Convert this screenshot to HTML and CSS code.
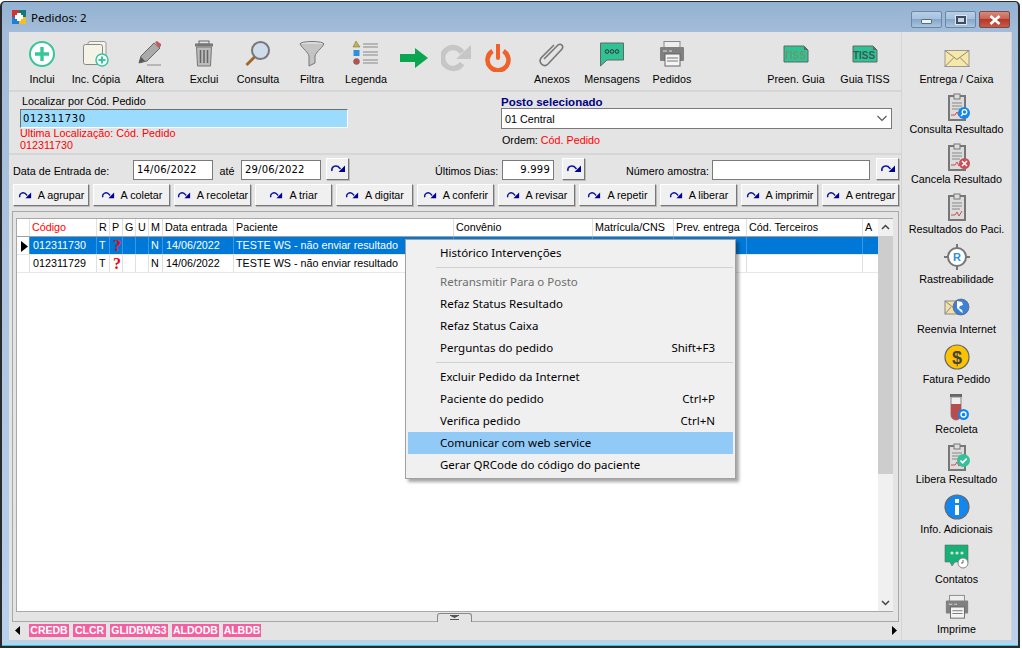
FILE: index.html
```html
<!DOCTYPE html>
<html lang="pt">
<head>
<meta charset="utf-8">
<title>Pedidos: 2</title>
<link rel="stylesheet" href="styles.css">
</head>
<body>
<svg class="defs" width="0" height="0">
  <defs>
    <symbol id="redo" viewBox="0 0 16 12"><path d="M2 8C1 4 5 2 8 3.500L10.500 6" fill="none" stroke="#1018a0" stroke-width="1.600"/><path d="M15 2.500V9H8.500Z" fill="#000090"/></symbol>
    <symbol id="clip" viewBox="0 0 28 28"><rect x="6" y="3" width="16" height="24" fill="#dcdcdc" stroke="#777" stroke-width="2"/><rect x="11" y="1" width="6" height="5" fill="#ddd" stroke="#777"/><path d="M9 10h10M9 13h10M9 16h8" stroke="#888"/><path d="M8 22l4 0 2-3 2 4 3-5" fill="none" stroke="#c85050"/></symbol>
  </defs>
</svg>
<div class="window">
  <header class="titlebar">
    <svg class="app-icon" width="14" height="14" viewBox="0 0 14 14"><rect width="7" height="7" fill="#d0342c"/><rect x="7" width="7" height="7" fill="#137a7a"/><rect y="7" width="7" height="7" fill="#1a80d8"/><rect x="7" y="7" width="7" height="7" fill="#f5bd1f"/><path d="M5 3h4v2h2v4H9v2H5V9H3V5h2z" fill="#fff"/></svg>
    <span class="title">Pedidos: 2</span>
    <div class="controls">
      <div class="ctl"><span class="ctl-min"></span></div>
      <div class="ctl"><span class="ctl-max"></span></div>
      <div class="ctl ctl-close"><svg width="12" height="10" viewBox="0 0 12 10"><path d="M1.500 1l9 8M10.500 1l-9 8" stroke="#fff" stroke-width="2.600"/></svg></div>
    </div>
  </header>
  <div class="client">
    <main class="main">
      <section class="toolbar">
        <div class="tool"><svg width="28" height="28" viewBox="0 0 28 28"><circle cx="14" cy="14" r="12" fill="#fff" stroke="#35c79a" stroke-width="2"/><path d="M14 7v14M7 14h14" stroke="#35c79a" stroke-width="3.400"/></svg><span>Inclui</span></div>
        <div class="tool"><svg width="28" height="28" viewBox="0 0 28 28"><rect x="6" y="1.500" width="18" height="20" rx="2" fill="#f5f2e6" stroke="#999"/><rect x="1.500" y="4.500" width="19" height="20" rx="2" fill="#f5f2e6" stroke="#888"/><circle cx="20" cy="20" r="6" fill="#fff" stroke="#35c79a" stroke-width="1.500"/><path d="M20 16.500v7M16.500 20h7" stroke="#35c79a" stroke-width="2"/></svg><span>Inc. Cópia</span></div>
        <div class="tool"><svg width="28" height="28" viewBox="0 0 28 28"><path d="M3 23l2-7L18 3l6 5L11 21z" fill="#aaa" stroke="#666"/><path d="M19 2l2-1 4 3 0 2-2 2z" fill="#c45a5a"/><path d="M3 23l2-6 4 4z" fill="#555"/><path d="M11 25h14" stroke="#888"/></svg><span>Altera</span></div>
        <div class="tool"><svg width="28" height="28" viewBox="0 0 28 28"><rect x="9" y="1" width="10" height="3" fill="none" stroke="#666"/><rect x="5" y="3.500" width="18" height="3" fill="#777"/><path d="M6.500 7h15l-1 19h-13z" fill="#bbb" stroke="#777"/><path d="M10.500 10v13M14 10v13M17.500 10v13" stroke="#666" stroke-width="1.500"/></svg><span>Exclui</span></div>
        <div class="tool"><svg width="28" height="28" viewBox="0 0 28 28"><circle cx="16.500" cy="10.500" r="8.500" fill="#cfdcec" stroke="#777" stroke-width="2"/><path d="M10.500 17l-8 8" stroke="#a0672e" stroke-width="3"/></svg><span>Consulta</span></div>
        <div class="tool"><svg width="28" height="28" viewBox="0 0 28 28"><ellipse cx="14" cy="4" rx="12" ry="2.500" fill="#ddd" stroke="#777"/><path d="M2 4c3 5 8 8 9 12v10l6-3v-7c1-4 6-7 9-12" fill="#c4c4c4" stroke="#777"/></svg><span>Filtra</span></div>
        <div class="tool"><svg width="28" height="28" viewBox="0 0 28 28"><path d="M4 1l4 6H1z" fill="#c9b43c" stroke="#666" stroke-width=".5"/><rect x="1.500" y="10" width="6" height="6" fill="#2d8fe0"/><circle cx="4.500" cy="21.500" r="3" fill="#b85050" stroke="#666" stroke-width=".5"/><path d="M11 4h15M11 7h15M11 12h15M11 15h15M11 20h15M11 23h15" stroke="#888" stroke-width="1.200"/></svg><span>Legenda</span></div>
        <div class="tool tool-nav tool-arrow"><svg width="30" height="20" viewBox="0 0 30 20"><path d="M1 6h15V0l13 10-13 10v-6H1z" fill="#0ba650"/></svg></div>
        <div class="tool tool-nav"><svg width="30" height="28" viewBox="0 0 30 28"><path d="M21 19.500a10.500 10.500 0 1 1 0-11" fill="none" stroke="#c6c6c6" stroke-width="5.500"/><path d="M30 1v14H15z" fill="#c6c6c6"/></svg></div>
        <div class="tool tool-nav"><svg width="26" height="28" viewBox="0 0 26 28"><path d="M7.500 7a10.500 10.500 0 1 0 11 0" fill="none" stroke="#f0602a" stroke-width="4.500"/><path d="M13 1v13" stroke="#f0602a" stroke-width="4" stroke-linecap="round"/></svg></div>
        <div class="tool tool-anexos"><svg width="28" height="28" viewBox="0 0 28 28"><path d="M7 18L21 4c3-2 6 1 4 4L11 23c-4 4-10-1-7-6L17 4" transform="translate(-1 1)" fill="none" stroke="#777" stroke-width="1.600"/></svg><span>Anexos</span></div>
        <div class="tool tool-msg"><svg width="26" height="26" viewBox="0 0 26 26"><path d="M1.500 2h23v17H8l-6.500 6z" fill="#2fc294" stroke="#666"/><circle cx="8" cy="10.500" r="1.800" fill="none" stroke="#333"/><circle cx="13" cy="10.500" r="1.800" fill="none" stroke="#333"/><circle cx="18" cy="10.500" r="1.800" fill="none" stroke="#333"/></svg><span>Mensagens</span></div>
        <div class="tool tool-ped"><svg width="28" height="28" viewBox="0 0 28 28"><rect x="6" y="1.500" width="16" height="8" fill="#eee" stroke="#888"/><rect x="2" y="7" width="24" height="14" rx="1" fill="#808080"/><path d="M5 11h4M11 11h3" stroke="#ddd"/><rect x="7" y="14" width="15" height="12" fill="#f4f4f4" stroke="#666"/><path d="M9 18h11M9 21h11" stroke="#777"/></svg><span>Pedidos</span></div>
        <div class="tool tool-guia"><svg width="26" height="18" viewBox="0 0 26 18"><path d="M1 1h20l4 4v12H1z" fill="#2fc294" stroke="#666"/><path d="M21 1v4h4z" fill="#666"/><text x="12" y="13.500" text-anchor="middle" class="tiss tiss-light">TISS</text></svg><span>Preen. Guia</span></div>
        <div class="tool tool-tiss"><svg width="26" height="18" viewBox="0 0 26 18"><path d="M1 1h20l4 4v12H1z" fill="#2fc294" stroke="#666"/><path d="M21 1v4h4z" fill="#666"/><text x="12" y="13.500" text-anchor="middle" class="tiss">TISS</text></svg><span>Guia TISS</span></div>
      </section>

      <section class="search">
        <div class="search-left">
          <label class="search-label">Localizar por Cód. Pedido</label>
          <div class="search-input">012311730</div>
          <div class="red">Ultima Localização: Cód. Pedido</div>
          <div class="red">012311730</div>
        </div>
        <div class="search-right">
          <div class="posto-label">Posto selecionado</div>
          <div class="select"><span>01 Central</span><svg width="12" height="7" viewBox="0 0 12 7"><path d="M1.500 1l4.500 4.500L10.500 1" fill="none" stroke="#555" stroke-width="1.100"/></svg></div>
          <div class="ordem">Ordem: <span class="red-inline">Cód. Pedido</span></div>
        </div>
      </section>

      <section class="filters">
        <span class="f-label f-data">Data de Entrada de:</span>
        <div class="field f-date">14/06/2022</div>
        <span class="f-label f-ate">até</span>
        <div class="field f-date">29/06/2022</div>
        <button class="icon-btn f-btn1"><svg width="16" height="12"><use href="#redo"/></svg></button>
        <span class="f-label f-ult">Últimos Dias:</span>
        <div class="field f-days">9.999</div>
        <button class="icon-btn f-btn2"><svg width="16" height="12"><use href="#redo"/></svg></button>
        <span class="f-label f-num">Número amostra:</span>
        <div class="field f-sample"></div>
        <button class="icon-btn f-btn3"><svg width="16" height="12"><use href="#redo"/></svg></button>
      </section>

      <section class="status-row">
        <button class="status"><svg width="14" height="11"><use href="#redo"/></svg>A agrupar</button>
        <button class="status"><svg width="14" height="11"><use href="#redo"/></svg>A coletar</button>
        <button class="status"><svg width="14" height="11"><use href="#redo"/></svg>A recoletar</button>
        <button class="status"><svg width="14" height="11"><use href="#redo"/></svg>A triar</button>
        <button class="status"><svg width="14" height="11"><use href="#redo"/></svg>A digitar</button>
        <button class="status"><svg width="14" height="11"><use href="#redo"/></svg>A conferir</button>
        <button class="status"><svg width="14" height="11"><use href="#redo"/></svg>A revisar</button>
        <button class="status"><svg width="14" height="11"><use href="#redo"/></svg>A repetir</button>
        <button class="status"><svg width="14" height="11"><use href="#redo"/></svg>A liberar</button>
        <button class="status"><svg width="14" height="11"><use href="#redo"/></svg>A imprimir</button>
        <button class="status"><svg width="14" height="11"><use href="#redo"/></svg>A entregar</button>
      </section>

      <section class="grid-frame">
        <div class="grid-box">
          <div class="grid">
            <div class="row head">
              <div class="c c0"></div><div class="c c1 code-h">Código</div><div class="c c2">R</div><div class="c c3">P</div><div class="c c4">G</div><div class="c c5">U</div><div class="c c6">M</div><div class="c c7">Data entrada</div><div class="c c8">Paciente</div><div class="c c9">Convênio</div><div class="c c10">Matrícula/CNS</div><div class="c c11">Prev. entrega</div><div class="c c12">Cód. Terceiros</div><div class="c c13">A</div>
            </div>
            <div class="row sel">
              <div class="c c0"><svg width="7" height="11" viewBox="0 0 7 11"><path d="M0 0l7 5.500L0 11z" fill="#000"/></svg></div><div class="c c1 num">012311730</div><div class="c c2">T</div><div class="c c3 q">?</div><div class="c c4"></div><div class="c c5"></div><div class="c c6">N</div><div class="c c7 num">14/06/2022</div><div class="c c8">TESTE WS - não enviar resultado</div><div class="c c9"></div><div class="c c10"></div><div class="c c11"></div><div class="c c12"></div><div class="c c13"></div>
            </div>
            <div class="row">
              <div class="c c0"></div><div class="c c1 num">012311729</div><div class="c c2">T</div><div class="c c3 q">?</div><div class="c c4"></div><div class="c c5"></div><div class="c c6">N</div><div class="c c7 num">14/06/2022</div><div class="c c8">TESTE WS - não enviar resultado</div><div class="c c9"></div><div class="c c10"></div><div class="c c11"></div><div class="c c12"></div><div class="c c13"></div>
            </div>
          </div>
          <div class="vscroll">
            <svg width="15" height="17" viewBox="0 0 15 17"><path d="M4 10l3.500-3.500L11 10" fill="none" stroke="#444" stroke-width="1.500"/></svg>
            <div class="thumb"></div>
            <div class="spacer"></div>
            <svg width="15" height="17" viewBox="0 0 15 17"><path d="M4 7l3.500 3.500L11 7" fill="none" stroke="#444" stroke-width="1.500"/></svg>
          </div>
        </div>
        <div class="splitter"><svg width="9" height="5" viewBox="0 0 9 5"><path d="M0 .500h9M1.500 1.500h6M3.500 2.500h2M0 4.500h9" stroke="#555"/></svg></div>
      </section>

      <section class="tabs">
        <svg class="arrow" width="6" height="9" viewBox="0 0 6 9"><path d="M5 0v9L0 4.500z" fill="#000"/></svg>
        <span class="tag t1">CREDB</span><span class="tag t2">CLCR</span><span class="tag t3">GLIDBWS3</span><span class="tag t4">ALDODB</span><span class="tag t5">ALBDB</span>
        <svg class="arrow arrow-r" width="6" height="9" viewBox="0 0 6 9"><path d="M1 0v9l5-4.500z" fill="#000"/></svg>
      </section>
    </main>

    <aside class="side">
      <div class="side-item"><svg width="26" height="20" viewBox="0 0 26 20"><rect x="1" y="2" width="24" height="16" fill="#f7e8a8" stroke="#999"/><path d="M1 2l12 9 12-9M1 18l9-9M25 18l-9-9" fill="none" stroke="#888"/></svg><span>Entrega / Caixa</span></div>
      <div class="side-item"><svg width="28" height="28" viewBox="0 0 28 28"><use href="#clip"/><circle cx="21" cy="20" r="6" fill="#1287ee"/><circle cx="21.500" cy="19" r="2.300" fill="none" stroke="#fff" stroke-width="1.200"/><path d="M20 21l-2 2" stroke="#fff" stroke-width="1.200"/></svg><span>Consulta Resultado</span></div>
      <div class="side-item"><svg width="28" height="28" viewBox="0 0 28 28"><use href="#clip"/><circle cx="21.500" cy="20.500" r="5.500" fill="#c4505a"/><path d="M19 18l5 5M24 18l-5 5" stroke="#fff" stroke-width="1.500"/></svg><span>Cancela Resultado</span></div>
      <div class="side-item"><svg width="28" height="28" viewBox="0 0 28 28"><use href="#clip"/></svg><span>Resultados do Paci.</span></div>
      <div class="side-item"><svg width="26" height="26" viewBox="0 0 26 26"><path d="M13 0v26M0 13h26" stroke="#777" stroke-width="2"/><circle cx="13" cy="13" r="9" fill="#fff" stroke="#777" stroke-width="2"/><text x="13" y="17" text-anchor="middle" class="rast">R</text></svg><span>Rastreabilidade</span></div>
      <div class="side-item"><svg width="26" height="24" viewBox="0 0 26 24"><rect x="1" y="6" width="17" height="13" fill="#f3e0a8" stroke="#888"/><path d="M1 6l9 7 8-7M1 19l6-7" fill="none" stroke="#888"/><circle cx="17" cy="12" r="8" fill="#3d80d8" stroke="#555" stroke-width=".6"/><path d="M13 6l5 1 1 3-3 1-1 2 3 2 1 3-2-1-4-4z" fill="#fff"/></svg><span>Reenvia Internet</span></div>
      <div class="side-item"><svg width="26" height="26" viewBox="0 0 26 26"><circle cx="13" cy="13" r="12" fill="#fdc300" stroke="#666" stroke-width="1.200"/><text x="13" y="19.500" text-anchor="middle" class="dollar">$</text></svg><span>Fatura Pedido</span></div>
      <div class="side-item"><svg width="28" height="28" viewBox="0 0 28 28"><rect x="7" y="1" width="12" height="3" fill="#666"/><path d="M8 4h10v18a5 5 0 0 1-10 0z" fill="#eee" stroke="#888"/><path d="M8 11h10v11a5 5 0 0 1-10 0z" fill="#b84d50"/><circle cx="20.500" cy="21.500" r="5.500" fill="#1287ee"/><circle cx="20.500" cy="21.500" r="2.500" fill="none" stroke="#fff" stroke-width="1.300"/></svg><span>Recoleta</span></div>
      <div class="side-item"><svg width="28" height="28" viewBox="0 0 28 28"><use href="#clip"/><circle cx="20.500" cy="17.500" r="6.500" fill="#34c09a"/><path d="M17.500 17.500l2.200 2.200 4-4" fill="none" stroke="#fff" stroke-width="1.700"/></svg><span>Libera Resultado</span></div>
      <div class="side-item"><svg width="26" height="26" viewBox="0 0 26 26"><circle cx="13" cy="13" r="12" fill="#1287ee" stroke="#666" stroke-width="1.200"/><rect x="11" y="5" width="4" height="4" fill="#fff"/><rect x="11" y="11" width="4" height="10" fill="#fff"/></svg><span>Info. Adicionais</span></div>
      <div class="side-item"><svg width="26" height="26" viewBox="0 0 26 26"><path d="M1 1h23v17H11l-3 4-2-4H1z" fill="#17b075" stroke="#667" stroke-width=".6"/><circle cx="8" cy="9" r="1.600" fill="#ddd"/><circle cx="13" cy="9" r="1.600" fill="#ddd"/><circle cx="18" cy="9" r="1.600" fill="#ddd"/><circle cx="19" cy="19" r="5" fill="#fff" stroke="#888"/><path d="M19 16v3h-2" fill="none" stroke="#666"/></svg><span>Contatos</span></div>
      <div class="side-item"><svg width="26" height="28" viewBox="0 0 28 28"><rect x="6" y="1.500" width="16" height="8" fill="#eee" stroke="#888"/><rect x="2" y="7" width="24" height="14" rx="1" fill="#808080"/><path d="M5 11h4M11 11h3" stroke="#ddd"/><rect x="7" y="14" width="15" height="12" fill="#f4f4f4" stroke="#666"/><path d="M9 18h11M9 21h11" stroke="#777"/></svg><span>Imprime</span></div>
    </aside>
  </div>

  <nav class="menu">
    <div class="mi">Histórico Intervenções</div>
    <div class="ms"></div>
    <div class="mi off">Retransmitir Para o Posto</div>
    <div class="mi">Refaz Status Resultado</div>
    <div class="mi">Refaz Status Caixa</div>
    <div class="mi">Perguntas do pedido<span>Shift+F3</span></div>
    <div class="ms"></div>
    <div class="mi">Excluir Pedido da Internet</div>
    <div class="mi">Paciente do pedido<span>Ctrl+P</span></div>
    <div class="mi">Verifica pedido<span>Ctrl+N</span></div>
    <div class="mi hot">Comunicar com web service</div>
    <div class="mi">Gerar QRCode do código do paciente</div>
  </nav>
</div>
</body>
</html>
```

FILE: styles.css
```css
* { box-sizing: border-box; }
html, body { margin: 0; padding: 0; background: #fff; overflow: hidden; }
body { width: 1022px; height: 649px; padding-top: 1px; font-family: "Liberation Sans", Arial, sans-serif; font-size: 10.750px; color: #000; }
.defs { position: absolute; }

.window { position: relative; width: 1020px; height: 647px; display: flex; flex-direction: column; background: linear-gradient(#93b2d2 0, #a3bcd8 30px, #b9d1ea 100%); border: 2px solid #2a2a2a; border-top-width: 1px; border-radius: 5px 5px 0 0; padding: 0 6px 6px 7px; box-shadow: inset 0 -1px 0 #29c8e0; }

.titlebar { height: 30px; display: flex; align-items: center; flex: none; }
.app-icon { margin: 0 0 0 3px; }
.title { margin-left: 5px; font-family: "Noto Sans", sans-serif; font-size: 11.500px; }
.controls { margin-left: auto; margin-right: 2px; display: flex; gap: 3px; align-self: flex-start; margin-top: 9px; }
.ctl { width: 31px; height: 17px; border: 1px solid #6d86a3; border-radius: 2px; background: linear-gradient(#b9cfe6 0, #a5c0dd 48%, #86a7ca 50%, #a8c4e0 100%); display: flex; align-items: center; justify-content: center; }
.ctl-min { width: 11px; height: 5px; margin-top: 4px; background: #eef3f8; border: 1px solid #5b6c80; border-radius: 1px; }
.ctl-max { width: 10px; height: 8px; border: 2px solid #3f4d5e; background: #c8d8e8; box-shadow: 0 0 0 1px #dde7f0; }
.ctl-close { background: linear-gradient(#d98a78 0, #c9604e 48%, #b23a2a 50%, #c85a48 100%); border-color: #7a4a48; }

.client { flex: 1; display: flex; background: #e4e4e4; min-height: 0; }
.main { width: 893px; flex: none; display: flex; flex-direction: column; border-right: 1px solid #d4d4d4; }
.side { flex: 1; display: flex; flex-direction: column; padding-top: 1px; border-right: 1px solid #d4d4d4; }

.toolbar { height: 60px; flex: none; display: flex; padding: 8px 0 0 6px; border-bottom: 2px solid #d6d6d6; }
.tool { width: 54px; height: 48px; display: flex; flex-direction: column; align-items: center; white-space: nowrap; }
.tool svg { flex: none; height: 28px; }
.tool span { margin-top: 4px; line-height: 15px; }
.tool-nav { width: 42px; justify-content: flex-start; padding-top: 4px; }
.tool-arrow { padding-top: 8px; }
.tool-arrow svg { height: 20px; }
.tool-anexos { width: 54px; margin-left: 6px; }
.tool-msg { width: 62px; margin-left: 2px; }
.tool-ped { width: 62px; margin-left: -2px; }
.tool-guia { width: 70px; margin-left: 58px; }
.tool-tiss { width: 70px; margin-left: -1px; }
.tool-guia svg, .tool-tiss svg { margin-top: 5px; height: 18px; }
.tool-guia span, .tool-tiss span { margin-top: 9px; }
.tiss { font-family: "Liberation Sans", sans-serif; font-size: 10px; font-weight: 700; fill: #3a5a5a; }
.tiss-light { fill: #6a9a70; }

.search { height: 63px; flex: none; display: flex; border-bottom: 2px solid #d6d6d6; }
.search-left { width: 481px; padding: 2px 0 0 11px; }
.search-label { display: block; line-height: 15px; margin-left: 2px; }
.search-input { width: 328px; height: 19px; background: #9bdcfd; border: 1px solid #fff; border-top-color: #6e6e6e; border-left-color: #6e6e6e; font-family: "DejaVu Sans", sans-serif; font-size: 10px; letter-spacing: .6px; line-height: 17px; padding-left: 2px; }
.red { color: #f00; line-height: 12px; }
.search-input + .red { margin-top: -1px; }
.search-right { width: 391px; padding-top: 3px; margin-left: 11px; }
.posto-label { color: #000080; font-weight: 700; line-height: 15px; font-size: 11.500px; }
.select { height: 21px; background: #fff; border: 1px solid #7a7a7a; display: flex; align-items: center; justify-content: space-between; padding: 0 3px 0 3px; margin-top: -2px; }
.ordem { margin-top: 4px; line-height: 15px; padding-left: 1px; }
.red-inline { color: #f00; }

.filters { height: 29px; flex: none; display: flex; align-items: flex-start; padding: 3px 0 0 4px; }
.f-label { white-space: nowrap; line-height: 15px; margin-top: 6px; }
.field { height: 20px; margin-top: 2px; background: #fff; border: 1px solid #7a7a7a; font-family: "DejaVu Sans", sans-serif; font-size: 10px; letter-spacing: .2px; line-height: 18px; padding: 0 3px; }
.f-data { width: 120px; }
.f-date { width: 80px; }
.f-ate { width: 28px; text-align: center; }
.f-days { width: 52px; text-align: right; }
.f-sample { width: 158px; }
.f-ult { margin-left: 86px; width: 67px; }
.f-num { margin-left: 41px; width: 86px; }
.icon-btn { width: 23px; height: 22px; padding: 0; display: flex; align-items: center; justify-content: center; background: #f0f0f0; border: 1px solid #fff; border-right-color: #777; border-bottom-color: #777; box-shadow: 1px 1px 0 #bbb; }
.f-btn1 { margin-left: 5px; }
.f-btn2 { margin-left: 8px; }
.f-btn3 { margin-left: 6px; }

.status-row { height: 27px; flex: none; display: flex; gap: 4px; padding: 0 0 0 4px; align-items: flex-start; }
.status { width: 77px; height: 22px; padding: 0; display: flex; align-items: center; justify-content: center; gap: 6px; background: #f0f0f0; border: 1px solid #fff; border-right-color: #777; border-bottom-color: #777; box-shadow: 1px 1px 0 #bbb; font: inherit; color: #000; white-space: nowrap; }
.status:first-child { width: 76px; }

.grid-frame { position: relative; height: 411px; flex: none; margin: 0 2px 0 3px; border: 1px solid #a8a8a8; padding: 6px 5px 9px 3px; }
.grid-box { height: 394px; background: #fff; border: 1px solid #a8a8a8; border-right: 0; display: flex; }
.grid { width: 861px; flex: none; }
.row { display: flex; height: 18px; border-bottom: 1px solid #e8e8e8; line-height: 16px; }
.head { border-bottom: 1px solid #a0a0a0; }
.c { flex: none; border-right: 1px solid #e0e0e0; padding-left: 2px; overflow: hidden; white-space: nowrap; }
.c0 { width: 13px; padding: 3px 0 0 4px; }
.c1 { width: 67px; padding-left: 2px; }
.c2 { width: 13px; }
.c3 { width: 13px; }
.c4 { width: 13px; }
.c5 { width: 13px; }
.c6 { width: 14px; }
.c7 { width: 71px; }
.c8 { width: 220px; }
.c9 { width: 139px; }
.c10 { width: 81px; }
.c11 { width: 73px; }
.c12 { width: 116px; }
.c13 { width: 14px; border-right: 0; }
.code-h { color: #f00; }
.num { padding-left: 3px; }
.q { color: #e8000b; font-family: "Liberation Serif", serif; font-weight: 700; font-size: 16px; line-height: 18px; overflow: visible; padding-left: 3px; }
.sel { background: #0078d7; color: #fff; }
.sel .c0 { background: #fff; }
.sel .q { color: #f00; }
.sel .c { border-right-color: #3a97e0; }
.vscroll { flex: 1; width: 15px; display: flex; flex-direction: column; background: #f0f0f0; }
.vscroll svg { flex: none; }
.thumb { width: 15px; height: 238px; background: #cdcdcd; flex: none; }
.spacer { flex: 1; }
.splitter { position: absolute; left: 424px; bottom: -1px; width: 35px; height: 9px; background: #e4e4e4; border: 1px solid #888; border-bottom: 0; border-radius: 3px 3px 0 0; display: flex; justify-content: center; padding-top: 1px; }

.tabs { height: 20px; flex: 1; display: flex; align-items: center; padding: 0 0 2px 6px; }
.arrow { flex: none; }
.tag { background: #f55f9f; color: #fff; font-family: "Liberation Sans", sans-serif; font-weight: 700; font-size: 10.500px; height: 13px; line-height: 13px; text-align: center; margin-right: 4px; }
.t1 { width: 40px; margin-left: 8px; }
.t2 { width: 33px; }
.t3 { width: 58px; }
.t4 { width: 47px; }
.t5 { width: 38px; }
.arrow-r { margin-left: auto; margin-right: 4px; }

.side-item { height: 50px; flex: none; display: flex; flex-direction: column; align-items: center; white-space: nowrap; }
.side-item svg { height: 30px; flex: none; margin-top: 9px; }
.side-item span { line-height: 14px; margin-top: 0; }
.side-item:first-child svg { margin-top: 12px; height: 27px; }
.rast { font-family: "Liberation Sans", sans-serif; font-size: 11px; font-weight: 700; fill: #2d8fe0; }
.dollar { font-family: "Liberation Sans", sans-serif; font-size: 18px; font-weight: 700; fill: #444; }

.menu { position: absolute; left: 403px; top: 237px; width: 331px; height: 240px; padding: 2px; background: #f0f0f0; border: 1px solid #a0a0a0; box-shadow: 3px 3px 3px rgba(0,0,0,.35); font-family: "Noto Sans", sans-serif; font-size: 11.500px; color: #000; }
.mi { height: 22px; line-height: 22px; padding: 0 18px 0 32px; display: flex; justify-content: space-between; white-space: nowrap; }
.ms { height: 7px; margin: 0 0 0 28px; position: relative; }
.ms::before { content: ""; display: block; height: 1px; background: #d0d0d0; position: relative; top: 3px; }
.off { color: #6d6d6d; }
.hot { background: #91c9f7; }
```
